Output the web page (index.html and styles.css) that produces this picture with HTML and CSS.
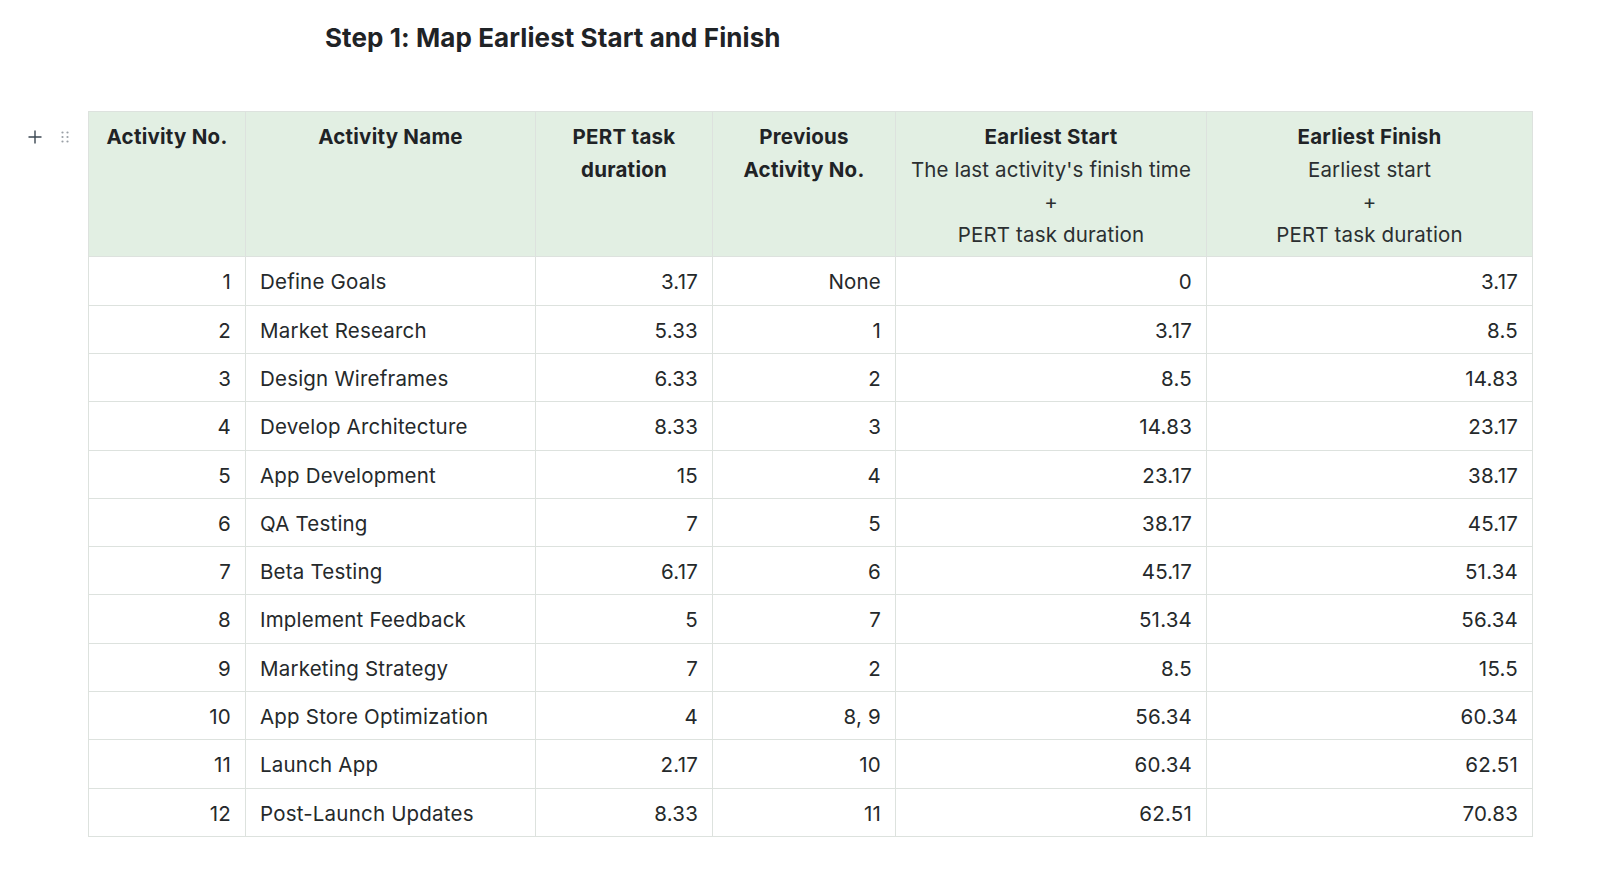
FILE: index.html
```html
<!DOCTYPE html>
<html>
<head>
<meta charset="utf-8">
<link rel="stylesheet" href="styles.css">
</head>
<body>
<div class="page">
  <h1 class="title">Step 1: Map Earliest Start and Finish</h1>
  <div class="block">
    <div class="controls">
      <svg class="plus" width="14" height="14" viewBox="0 0 14 14"><path d="M7 0.5V13.5M0.5 7H13.5" stroke="#3b4752" stroke-width="1.4"/></svg>
      <svg class="grip" width="8" height="12" viewBox="0 0 8 12"><g fill="#9aa0a6"><circle cx="1.5" cy="1.5" r="1.1"/><circle cx="6.5" cy="1.5" r="1.1"/><circle cx="1.5" cy="6" r="1.1"/><circle cx="6.5" cy="6" r="1.1"/><circle cx="1.5" cy="10.5" r="1.1"/><circle cx="6.5" cy="10.5" r="1.1"/></g></svg>
    </div>
    <table class="grid">
      <colgroup>
        <col class="c1"><col class="c2"><col class="c3"><col class="c4"><col class="c5"><col class="c6">
      </colgroup>
      <thead>
        <tr>
          <th>Activity No.</th>
          <th>Activity Name</th>
          <th>PERT task<br>duration</th>
          <th>Previous<br>Activity No.</th>
          <th>Earliest Start<br><span class="sub">The last activity's finish time<br>+<br>PERT task duration</span></th>
          <th>Earliest Finish<br><span class="sub">Earliest start<br>+<br>PERT task duration</span></th>
        </tr>
      </thead>
      <tbody>
        <tr><td class="num">1</td><td>Define Goals</td><td class="num">3.17</td><td class="num">None</td><td class="num">0</td><td class="num">3.17</td></tr>
        <tr><td class="num">2</td><td>Market Research</td><td class="num">5.33</td><td class="num">1</td><td class="num">3.17</td><td class="num">8.5</td></tr>
        <tr><td class="num">3</td><td>Design Wireframes</td><td class="num">6.33</td><td class="num">2</td><td class="num">8.5</td><td class="num">14.83</td></tr>
        <tr><td class="num">4</td><td>Develop Architecture</td><td class="num">8.33</td><td class="num">3</td><td class="num">14.83</td><td class="num">23.17</td></tr>
        <tr><td class="num">5</td><td>App Development</td><td class="num">15</td><td class="num">4</td><td class="num">23.17</td><td class="num">38.17</td></tr>
        <tr><td class="num">6</td><td>QA Testing</td><td class="num">7</td><td class="num">5</td><td class="num">38.17</td><td class="num">45.17</td></tr>
        <tr><td class="num">7</td><td>Beta Testing</td><td class="num">6.17</td><td class="num">6</td><td class="num">45.17</td><td class="num">51.34</td></tr>
        <tr><td class="num">8</td><td>Implement Feedback</td><td class="num">5</td><td class="num">7</td><td class="num">51.34</td><td class="num">56.34</td></tr>
        <tr><td class="num">9</td><td>Marketing Strategy</td><td class="num">7</td><td class="num">2</td><td class="num">8.5</td><td class="num">15.5</td></tr>
        <tr><td class="num">10</td><td>App Store Optimization</td><td class="num">4</td><td class="num">8, 9</td><td class="num">56.34</td><td class="num">60.34</td></tr>
        <tr><td class="num">11</td><td>Launch App</td><td class="num">2.17</td><td class="num">10</td><td class="num">60.34</td><td class="num">62.51</td></tr>
        <tr><td class="num">12</td><td>Post-Launch Updates</td><td class="num">8.33</td><td class="num">11</td><td class="num">62.51</td><td class="num">70.83</td></tr>
      </tbody>
    </table>
  </div>
</div>
</body>
</html>
```
FILE: styles.css
```css
html, body {
  margin: 0;
  padding: 0;
  background: #ffffff;
}
body {
  font-family: Inter, "Noto Sans", "Liberation Sans", sans-serif;
  color: #1f2326;
}
.page {
  width: 1600px;
  height: 890px;
  overflow: hidden;
}
.title {
  margin: 0;
  padding: 22px 0 0 325px;
  font-size: 26px;
  line-height: 32px;
  font-weight: 700;
  color: #1f2326;
  letter-spacing: 0.08px;
}
.block {
  display: flex;
  margin-top: 57px;
}
.controls {
  width: 88px;
  flex: none;
  display: flex;
  align-items: flex-start;
  padding-top: 19px;
  box-sizing: border-box;
}
.plus {
  margin-left: 28px;
}
.grip {
  margin-left: 19px;
  margin-top: 1px;
}
.grid {
  border-collapse: collapse;
  table-layout: fixed;
  width: 1444px;
  font-size: 20.5px;
}
.c1 { width: 157px; }
.c2 { width: 290px; }
.c3 { width: 177px; }
.c4 { width: 183px; }
.c5 { width: 311px; }
.c6 { width: 326px; }
.grid th, .grid td {
  border: 1px solid #dde2de;
  padding: 8px 14px;
  line-height: 31.3px;
  letter-spacing: 0.2px;
}
.grid th {
  background: #e2efe3;
  font-weight: 700;
  text-align: center;
  vertical-align: top;
  color: #1f2326;
  line-height: 32.6px;
  padding-top: 9px;
  padding-bottom: 5px;
  letter-spacing: 0.25px;
}
.grid th .sub {
  font-weight: 400;
  color: #2b2f31;
  letter-spacing: 0.15px;
}
.grid td {
  color: #25292b;
  text-align: left;
  white-space: nowrap;
  padding-top: 9px;
  padding-bottom: 7px;
}
.grid td.num {
  text-align: right;
}
```
